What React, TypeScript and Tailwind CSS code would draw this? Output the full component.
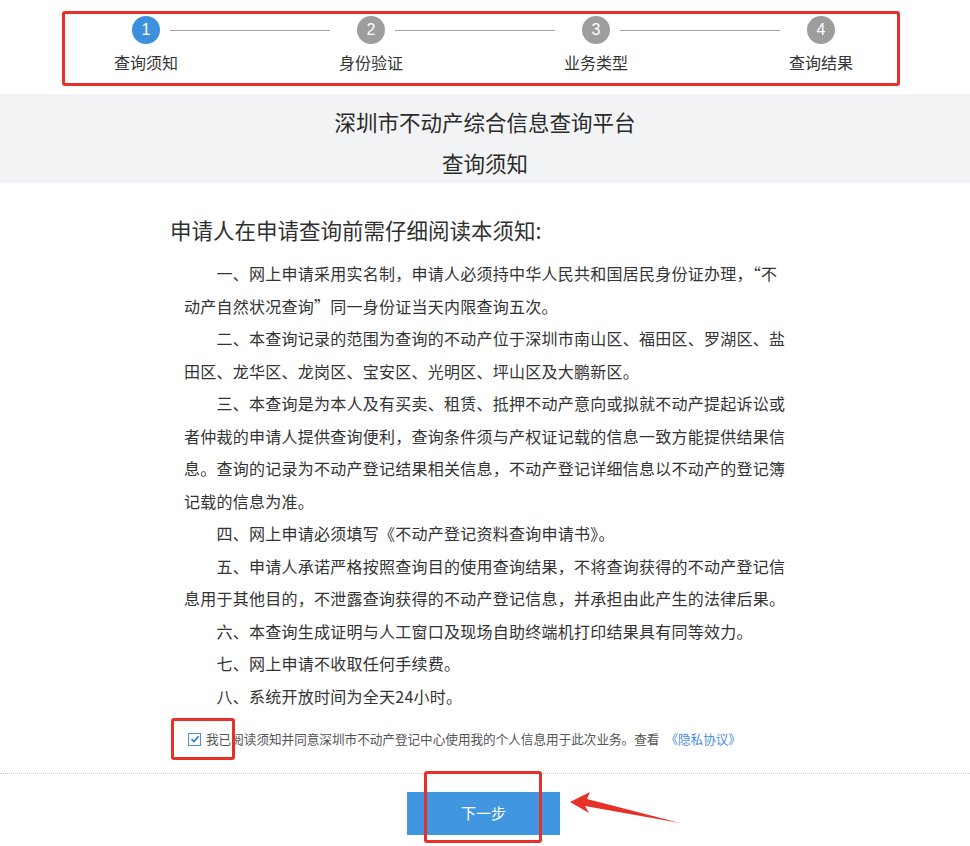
import { Fragment } from 'react'

const steps = ['查询须知', '身份验证', '业务类型', '查询结果']

const rules = [
  '一、网上申请采用实名制，申请人必须持中华人民共和国居民身份证办理，“不动产自然状况查询”同一身份证当天内限查询五次。',
  '二、本查询记录的范围为查询的不动产位于深圳市南山区、福田区、罗湖区、盐田区、龙华区、龙岗区、宝安区、光明区、坪山区及大鹏新区。',
  '三、本查询是为本人及有买卖、租赁、抵押不动产意向或拟就不动产提起诉讼或者仲裁的申请人提供查询便利，查询条件须与产权证记载的信息一致方能提供结果信息。查询的记录为不动产登记结果相关信息，不动产登记详细信息以不动产的登记簿记载的信息为准。',
  '四、网上申请必须填写《不动产登记资料查询申请书》。',
  '五、申请人承诺严格按照查询目的使用查询结果，不将查询获得的不动产登记信息用于其他目的，不泄露查询获得的不动产登记信息，并承担由此产生的法律后果。',
  '六、本查询生成证明与人工窗口及现场自助终端机打印结果具有同等效力。',
  '七、网上申请不收取任何手续费。',
  '八、系统开放时间为全天24小时。',
]

export default function App() {
  return (
    <div className="relative w-[970px] h-[846px] overflow-hidden bg-white text-[#333] font-['Noto_Sans_CJK_SC','Noto_Sans',sans-serif]">
      {/* Stepper */}
      <div className="flex pl-[132px] pt-[16px] h-[94px]">
        {steps.map((label, i) => (
          <Fragment key={label}>
            <div className="flex flex-col items-center w-[28px]">
              <div
                className={`w-[28px] h-[28px] rounded-full flex items-center justify-center text-white text-[16px] font-['Liberation_Sans',sans-serif] ${
                  i === 0 ? 'bg-[#3d91dc]' : 'bg-[#9d9d9d]'
                }`}
              >
                {i + 1}
              </div>
              <div className="mt-[6px] whitespace-nowrap text-[16px] leading-[24px]">{label}</div>
            </div>
            {i < steps.length - 1 && (
              <div className="self-start mt-[14px] ml-[10px] mr-[27px] w-[160px] h-px bg-[#a3a3a3]" />
            )}
          </Fragment>
        ))}
      </div>

      {/* Title band */}
      <div className="bg-[#f2f3f4] pt-[7px] text-center text-[21.5px] leading-[41px] text-[#2b2b2b]">
        <div>深圳市不动产综合信息查询平台</div>
        <div>查询须知</div>
      </div>

      {/* Notice */}
      <div className="mx-auto w-[630px] pt-[32px]">
        <h1 className="text-[21.5px] leading-[30px] text-[#2f2f2f]">申请人在申请查询前需仔细阅读本须知:</h1>
        <div className="mt-[12px] px-[14px] text-[16px] leading-[32.5px] tracking-[0.25px] text-[#333]">
          {rules.map((r) => (
            <p key={r} className="indent-[32.5px]">
              {r}
            </p>
          ))}
        </div>
        <label className="mt-[17px] flex items-center h-[20px] pl-[18px] text-[12.6px] text-[#555]">
          <span className="w-[13px] h-[13px] border border-[#4a90d9] bg-white flex items-center justify-center shrink-0">
            <svg width="10" height="10" viewBox="0 0 10 10">
              <path d="M1.5 5.2 L4 7.6 L8.6 2.2" fill="none" stroke="#2f7fd0" strokeWidth="1.7" />
            </svg>
          </span>
          <span className="ml-[5px] whitespace-nowrap">
            我已阅读须知并同意深圳市不动产登记中心使用我的个人信息用于此次业务。查看
            <a className="ml-[6px] text-[#4a90e2]">《隐私协议》</a>
          </span>
        </label>
      </div>

      <div className="mt-[24px] border-t border-dotted border-[#c8c8c8]" />

      <div className="flex justify-center pt-[18px]">
        <button className="ml-[-3px] w-[153px] h-[43px] bg-[#4197df] text-white text-[15px]">下一步</button>
      </div>

      {/* Annotation marks */}
      <div className="absolute left-[62px] top-[11px] w-[838px] h-[75px] border-[3px] border-[#e8302a] rounded-[3px]" />
      <div className="absolute left-[171px] top-[718px] w-[64px] h-[42px] border-[3px] border-[#e8302a] rounded-[3px]" />
      <div className="absolute left-[424px] top-[771px] w-[118px] h-[72px] border-[3px] border-[#e8302a] rounded-[3px]" />
      <svg className="absolute left-0 top-0" width="970" height="846">
        <polygon points="570,802 590,792 587,799 680,823 585,806 589,813" fill="#e8302a" />
      </svg>
    </div>
  )
}
